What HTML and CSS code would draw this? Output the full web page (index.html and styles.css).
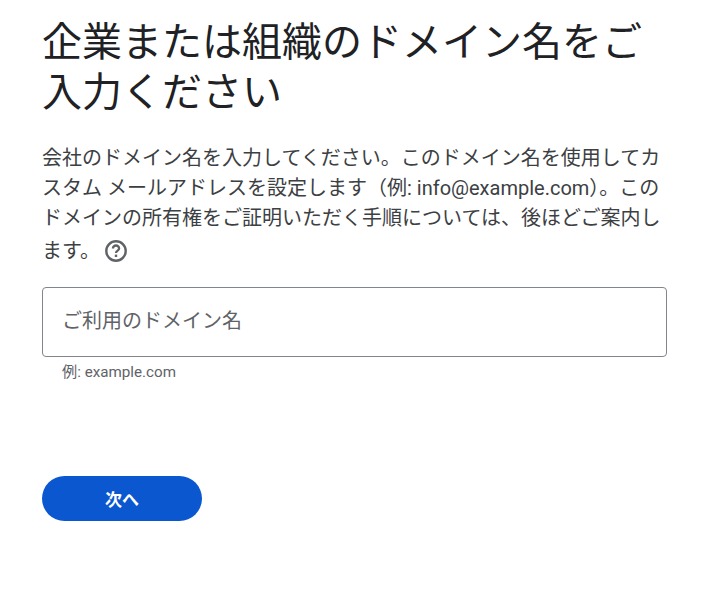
FILE: index.html
```html
<!DOCTYPE html>
<html lang="ja">
    <head>
        <meta charset="utf-8" />
        <title>ドメイン名</title>
        <link rel="stylesheet" href="styles.css">
    </head>
    <body>
        <h1 class="title">企業または組織のドメイン名をご入力ください</h1>
        <p class="desc">会社のドメイン名を入力してください。このドメイン名を使用してカスタム メールアドレスを設定します（例: info@example.com）。このドメインの所有権をご証明いただく手順については、後ほどご案内します。<svg class="help" width="24" height="24" viewBox="0 0 24 24"><circle cx="12" cy="12" r="9.7" fill="none" stroke="#5f6368" stroke-width="2.4"/><path d="M8.9 9.6a3.1 3.1 0 0 1 6.2 0c0 2-3.1 2.2-3.1 4.5" fill="none" stroke="#5f6368" stroke-width="2.3"/><rect x="10.8" y="15.6" width="2.4" height="2.4" fill="#5f6368"/></svg></p>
        <div class="field">ご利用のドメイン名</div>
        <div class="hint">例: example.com</div>
        <button class="next">次へ</button>
    </body>
</html>
```
FILE: styles.css
```css
html, body {
    margin: 0;
    padding: 0;
    background: #fff;
}
body {
    width: 625px;
    padding: 18px 0 70px 42px;
    font-family: Roboto, "Noto Sans CJK JP", sans-serif;
    color: #202124;
}
.title {
    margin: 0;
    font-size: 40px;
    line-height: 50px;
    font-weight: 400;
}
.desc {
    margin: 25px 0 0;
    font-size: 20px;
    line-height: 30px;
    color: #3c4043;
}
.help {
    margin: 6px 0 0 4px;
    vertical-align: -5px;
}
.field {
    box-sizing: border-box;
    height: 70px;
    margin-top: 21px;
    padding: 0 19px;
    border: 1px solid #80868b;
    border-radius: 4px;
    font-size: 20px;
    line-height: 66px;
    color: #5f6368;
}
.hint {
    margin-top: 6px;
    padding-left: 20px;
    font-size: 15.2px;
    line-height: 18px;
    color: #5f6368;
}
.next {
    display: block;
    width: 160px;
    height: 45px;
    margin-top: 95px;
    border: 0;
    border-radius: 23px;
    background: #0b57d0;
    color: #fff;
    font-family: inherit;
    font-size: 17px;
    font-weight: 700;
}
```
